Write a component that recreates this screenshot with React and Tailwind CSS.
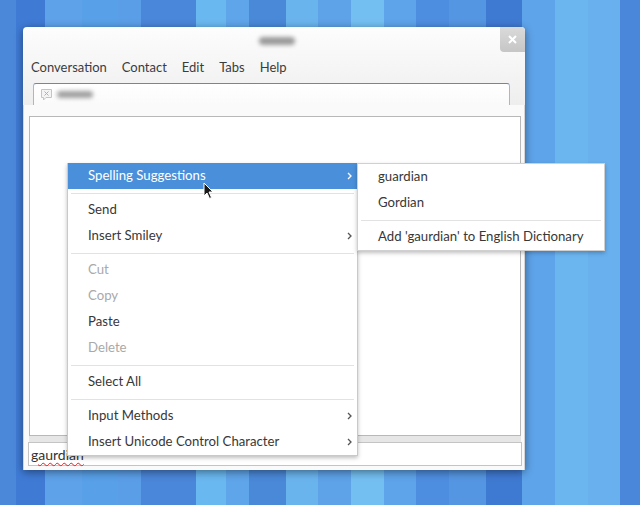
import { useState } from "react";

const stripes = [
  [0, 16, "#4c88da"], [16, 45, "#3f7bd5"], [45, 82, "#5ea2ea"], [82, 118, "#58a0e8"],
  [118, 141, "#5b9ee8"], [141, 196, "#4a86d9"], [196, 226, "#6ab8f0"], [226, 249, "#5fa5ea"],
  [249, 286, "#4a88d8"], [286, 318, "#6ab4ee"], [318, 351, "#5ea2e8"], [351, 384, "#74bff2"],
  [384, 416, "#5ea4ea"], [416, 449, "#4e8ee0"], [449, 486, "#5596e2"], [486, 522, "#3f7ad2"],
  [522, 555, "#5ea4ea"], [555, 588, "#6cb6f0"], [588, 620, "#68b0ee"], [620, 640, "#4a86da"],
];

function Wallpaper() {
  return (
    <svg className="absolute inset-0" width="640" height="505">
      {stripes.map(([a, b, c]) => (
        <rect key={a} x={a} y="0" width={b - a} height="505" fill={c} />
      ))}
    </svg>
  );
}

function Chevron({ light }) {
  return (
    <svg width="5" height="8" viewBox="0 0 5 8">
      <path d="M1 1 L4 4 L1 7" fill="none" stroke={light ? "#ffffff" : "#555555"} strokeWidth="1.3" />
    </svg>
  );
}

function Item({ label, sub, active, disabled }) {
  return (
    <div
      className={
        "h-[26px] flex items-center justify-between pl-[20px] pr-[5px] pb-[1px] " +
        (active ? "bg-[#4a8fd9] text-white" : disabled ? "text-[#a9a9a9]" : "text-[#383838]")
      }
    >
      <span>{label}</span>
      {sub && <Chevron light={active} />}
    </div>
  );
}

function Sep() {
  return (
    <div className="h-[8px] flex items-center px-[3px]">
      <div className="h-px w-full bg-[#e2e2e2]" />
    </div>
  );
}

function Window() {
  return (
    <div className="absolute left-[23px] top-[27px] w-[502px] h-[443px] flex flex-col rounded-t-[4px] bg-gradient-to-b from-[#fdfdfd] to-[#ececec] to-[20%] shadow-[0_2px_8px_rgba(0,0,0,0.45)]">
      <div className="h-[25px] flex justify-end relative">
        <div className="absolute left-[236px] top-[10px] w-[36px] h-[8px] rounded-full bg-[#9a9a9a] blur-[2px]" />
        <div className="w-[25px] h-[25px] rounded-bl-[4px] rounded-tr-[4px] bg-gradient-to-b from-[#dadada] to-[#c6c6c6] flex items-center justify-center">
          <svg width="9" height="9" viewBox="0 0 9 9">
            <path d="M1 1 L8 8 M8 1 L1 8" stroke="#ffffff" strokeWidth="2" />
          </svg>
        </div>
      </div>
      <div className="h-[28px] flex items-center pl-[8px] pt-[4px] gap-[15px] text-[13px] text-[#3c3c3c]">
        <span>Conversation</span>
        <span>Contact</span>
        <span>Edit</span>
        <span>Tabs</span>
        <span>Help</span>
      </div>
      <div className="h-[3px]" />
      <div className="h-[22px] flex">
        <div className="ml-[10px] w-[477px] rounded-t-[3px] border border-b-0 border-[#b5b5b5] border-t-[#4b8fdb] bg-gradient-to-b from-white to-[#fafafa] flex items-center pl-[6px] gap-[4px]">
          <svg width="13" height="13" viewBox="0 0 13 13">
            <path d="M1.5 1.5 H11.5 V9.5 H6 L3.5 12 V9.5 H1.5 Z" fill="#f4f4f4" stroke="#c4c4c4" />
            <path d="M4.5 3.5 L8.5 7.5 M8.5 3.5 L4.5 7.5" stroke="#b0b0b0" strokeWidth="1" />
          </svg>
          <div className="w-[36px] h-[7px] rounded-full bg-[#a0a0a0] blur-[2px]" />
        </div>
      </div>
      <div className="flex-1 flex flex-col bg-[#fafafa] border-x border-[#d6d6d6] pt-[11px] pb-[4px]">
        <div className="h-[320px] ml-[5px] mr-[3px] border border-[#b8b8b8] bg-white" />
        <div className="h-[6px] ml-[5px] mr-[3px] bg-[#e6e6e6]" />
        <div className="h-[24px] ml-[4px] mr-[2px] border border-[#c4c4c4] bg-white flex items-center pl-[2px] text-[14px] text-[#333333]">
          <span className="underline decoration-wavy decoration-[#e02020] decoration-1 underline-offset-[2px]">gaurdian</span>
        </div>
      </div>
    </div>
  );
}

export default function App() {
  const [hover] = useState("Spelling Suggestions");
  return (
    <div className="relative w-[640px] h-[505px] overflow-hidden font-['Lato',sans-serif]">
      <Wallpaper />
      <Window />
      <div className="absolute left-[67px] top-[163px] w-[291px] bg-white border border-t-0 border-[#c9c9c9] shadow-[0_2px_4px_rgba(0,0,0,0.25)] text-[13.2px]">
        <Item label="Spelling Suggestions" sub active={hover === "Spelling Suggestions"} />
        <Sep />
        <Item label="Send" />
        <Item label="Insert Smiley" sub />
        <Sep />
        <Item label="Cut" disabled />
        <Item label="Copy" disabled />
        <Item label="Paste" />
        <Item label="Delete" disabled />
        <Sep />
        <Item label="Select All" />
        <Sep />
        <Item label="Input Methods" sub />
        <Item label="Insert Unicode Control Character" sub />
      </div>
      <div className="absolute left-[357px] top-[163px] w-[248px] bg-white border border-[#d0d0d0] shadow-[0_2px_4px_rgba(0,0,0,0.25)] text-[13.2px]">
        <Item label="guardian" />
        <Item label="Gordian" />
        <Sep />
        <Item label="Add 'gaurdian' to English Dictionary" />
      </div>
      <svg className="absolute left-[203px] top-[182px]" width="12" height="18" viewBox="0 0 12 18">
        <path d="M1 1 L1 14 L4 11 L6.5 16.5 L8.5 15.5 L6 10 L10 10 Z" fill="#1a1a1a" stroke="#ffffff" strokeWidth="1" />
      </svg>
    </div>
  );
}
